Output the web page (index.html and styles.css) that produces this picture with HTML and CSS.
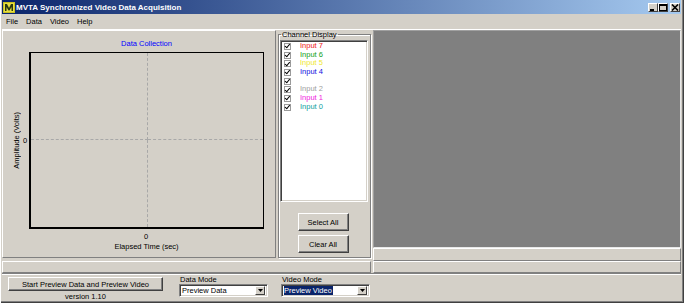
FILE: index.html
```html
<!DOCTYPE html>
<html>
<head>
<meta charset="utf-8">
<title>MVTA Synchronized Video Data Acquisition</title>
<link rel="stylesheet" href="styles.css">
</head>
<body>
<div class="window">
  <div class="titlebar">
    <svg class="app-icon" width="12" height="11" viewBox="0 0 12 11">
      <rect x="0" y="0" width="12" height="11" fill="#c8c020"/>
      <rect x="1" y="1" width="10" height="9" fill="#e8e040"/>
      <path d="M2 9 L2 2 L4 2 L6 6 L8 2 L10 2 L10 9 L8.5 9 L8.5 5 L6.5 8.5 L5.5 8.5 L3.5 5 L3.5 9 Z" fill="#2a3a10"/>
    </svg>
    <span class="title">MVTA Synchronized Video Data Acquisition</span>
    <div class="caption-btns">
      <span class="cbtn"><svg width="8" height="7" viewBox="0 0 8 7"><rect x="1" y="5" width="4" height="2" fill="#000"/></svg></span>
      <span class="cbtn"><svg width="8" height="7" viewBox="0 0 8 7"><rect x="0.5" y="0.5" width="7" height="6" fill="none" stroke="#000"/><rect x="0" y="0" width="8" height="2" fill="#000"/></svg></span>
      <span class="cbtn close"><svg width="8" height="7" viewBox="0 0 8 7"><path d="M1 0.5 L7 6.5 M7 0.5 L1 6.5" stroke="#000" stroke-width="1.6"/></svg></span>
    </div>
  </div>
  <div class="menubar">
    <span class="menu-item">File</span>
    <span class="menu-item">Data</span>
    <span class="menu-item">Video</span>
    <span class="menu-item">Help</span>
  </div>
  <div class="client">
    <div class="left-col">
      <div class="top-row">
        <div class="chart-panel">
          <div class="chart-title">Data Collection</div>
          <div class="ylabel"><span>Amplitude (Volts)</span></div>
          <div class="ytick">0</div>
          <div class="plot">
            <div class="cell c-tl"></div>
            <div class="cell c-tr"></div>
            <div class="cell c-bl"></div>
            <div class="cell c-br"></div>
          </div>
          <div class="xtick">0</div>
          <div class="xlabel">Elapsed Time (sec)</div>
        </div>
        <fieldset class="channels">
          <legend>Channel Display</legend>
          <ul class="listbox">
            <li class="item"><span class="chk"></span><span class="name in7">Input 7</span></li>
            <li class="item"><span class="chk"></span><span class="name in6">Input 6</span></li>
            <li class="item"><span class="chk"></span><span class="name in5">Input 5</span></li>
            <li class="item"><span class="chk"></span><span class="name in4">Input 4</span></li>
            <li class="item"><span class="chk"></span><span class="name"></span></li>
            <li class="item"><span class="chk"></span><span class="name in2">Input 2</span></li>
            <li class="item"><span class="chk"></span><span class="name in1">Input 1</span></li>
            <li class="item"><span class="chk"></span><span class="name in0">Input 0</span></li>
          </ul>
          <div class="group-btns">
            <button class="btn small">Select All</button>
            <button class="btn small">Clear All</button>
          </div>
        </fieldset>
      </div>
      <div class="strip strip-left"></div>
    </div>
    <div class="right-col">
      <div class="video"></div>
      <div class="strip strip-r1"></div>
      <div class="strip strip-r2"></div>
    </div>
  </div>
  <div class="bottom">
    <div class="start-col">
      <button class="btn start">Start Preview Data and Preview Video</button>
      <div class="version">version 1.10</div>
    </div>
    <div class="mode data-mode">
      <div class="mode-label">Data Mode</div>
      <div class="combo"><span class="val">Preview Data</span><span class="drop"><svg width="5" height="3" viewBox="0 0 5 3"><path d="M0 0 H5 L2.5 3 Z" fill="#000"/></svg></span></div>
    </div>
    <div class="mode video-mode">
      <div class="mode-label">Video Mode</div>
      <div class="combo"><span class="val selected">Preview Video</span><span class="drop"><svg width="5" height="3" viewBox="0 0 5 3"><path d="M0 0 H5 L2.5 3 Z" fill="#000"/></svg></span></div>
    </div>
  </div>
</div>
</body>
</html>
```
FILE: styles.css
```css
html, body {
  margin: 0;
  padding: 0;
}
body {
  width: 684px;
  height: 303px;
  overflow: hidden;
  background: #d4d0c8;
  font-family: "Liberation Sans", Arial, sans-serif;
  font-size: 7.5px;
  color: #000;
}
.window {
  box-sizing: border-box;
  width: 684px;
  height: 303px;
  display: flex;
  flex-direction: column;
  padding: 0 3px 3px 2px;
  background: #d4d0c8;
  box-shadow: inset 1px 0 #fff, inset -1px -1px #404040, inset -2px -2px #808080;
}

/* title bar */
.titlebar {
  height: 14px;
  flex: none;
  display: flex;
  align-items: center;
  background: linear-gradient(to right, #0a246a, #a6caf0);
  padding-left: 1px;
}
.app-icon {
  flex: none;
  display: block;
}
.title {
  color: #fff;
  font-weight: bold;
  font-size: 8px;
  margin-left: 1px;
  white-space: nowrap;
}
.caption-btns {
  margin-left: auto;
  margin-right: 1px;
  display: flex;
}
.cbtn {
  box-sizing: border-box;
  width: 10px;
  height: 9px;
  background: #d4d0c8;
  border: 1px solid;
  border-color: #fff #404040 #404040 #fff;
  display: flex;
  align-items: center;
  justify-content: center;
}
.cbtn svg { display: block; }
.cbtn.close { margin-left: 2px; }

/* menu */
.menubar {
  height: 15px;
  flex: none;
  display: flex;
  align-items: center;
  gap: 8px;
  padding-left: 4px;
  font-size: 7.5px;
}

/* client */
.client {
  flex: none;
  height: 244px;
  display: flex;
  border-top: 1px solid #fff;
  box-sizing: border-box;
}
.left-col {
  width: 369px;
  flex: none;
  display: flex;
  flex-direction: column;
}
.top-row {
  height: 231px;
  display: flex;
  box-sizing: border-box;
  padding-bottom: 3px;
}
.chart-panel {
  box-sizing: border-box;
  width: 274px;
  flex: none;
  border: 1px solid;
  border-color: #fff #808080 #808080 #fff;
  display: grid;
  grid-template-columns: 10px 8px 235px;
  grid-template-rows: 21px 177px 13px 10px;
  column-gap: 0;
  padding-left: 8px;
  grid-template-areas:
    ". . title"
    "ylab ytick plot"
    ". . xtick"
    ". . xlab";
}
.chart-title {
  grid-area: title;
  color: #0000ff;
  text-align: center;
  padding-top: 8px;
  line-height: 9px;
}
.ylabel {
  grid-area: ylab;
  display: flex;
  align-items: center;
  justify-content: center;
}
.ylabel span {
  writing-mode: vertical-rl;
  transform: rotate(180deg);
  white-space: nowrap;
  line-height: 9px;
}
.ytick {
  grid-area: ytick;
  align-self: center;
  text-align: center;
  line-height: 9px;
}
.plot {
  grid-area: plot;
  box-sizing: border-box;
  border: 1px solid #000;
  border-left-width: 2px;
  border-bottom-width: 2px;
  display: grid;
  grid-template-columns: 117px 1fr;
  grid-template-rows: 87px 1fr;
}
.cell { box-sizing: border-box; }
.c-tl { border-right: 1px dashed #a8a8a8; border-bottom: 1px dashed #a8a8a8; }
.c-tr { border-bottom: 1px dashed #a8a8a8; }
.c-bl { border-right: 1px dashed #a8a8a8; }
.xtick {
  grid-area: xtick;
  text-align: center;
  line-height: 9px;
  padding-top: 3px;
  padding-right: 1px;
}
.xlabel {
  grid-area: xlab;
  text-align: center;
  line-height: 9px;
}

/* channel group */
.channels {
  box-sizing: border-box;
  width: 93px;
  flex: none;
  margin: 0 0 0 2px;
  padding: 0 2px 4px 1px;
  border: 1px solid #808080;
  box-shadow: 1px 1px #fff, inset 1px 1px #fff;
  display: flex;
  flex-direction: column;
  min-width: 0;
}
.channels legend {
  padding: 0 1px;
  margin-left: 1px;
  line-height: 9px;
  font-size: 7.5px;
}
.listbox {
  list-style: none;
  margin: 1px 0 0 0;
  padding: 1px 0 0 0;
  height: 163px;
  box-sizing: border-box;
  background: #fff;
  border: 1px solid;
  border-color: #808080 #fff #fff #808080;
  box-shadow: inset 1px 1px #404040, inset -1px -1px #d4d0c8;
}
.item {
  height: 8.7px;
  display: flex;
  align-items: center;
  padding-left: 3px;
  line-height: 8.7px;
}
.chk {
  box-sizing: border-box;
  width: 7px;
  height: 7px;
  flex: none;
  position: relative;
  background: #fff;
  border: 1px solid #9a9a9a;
}
.chk::after {
  content: "";
  position: absolute;
  left: 1px;
  top: -0.5px;
  width: 2px;
  height: 3.5px;
  border: solid #000;
  border-width: 0 1.3px 1.3px 0;
  transform: rotate(40deg);
}
.name { margin-left: 9px; white-space: nowrap; }
.in7 { color: #f01818; }
.in6 { color: #10a020; }
.in5 { color: #f0e830; }
.in4 { color: #1010e0; }
.in2 { color: #a0a0a0; }
.in1 { color: #f020e0; }
.in0 { color: #10a0a0; }
.group-btns {
  display: flex;
  flex-direction: column;
  align-items: center;
  gap: 4px;
  margin-top: 11px;
  padding-right: 2px;
}
.btn {
  box-sizing: border-box;
  background: #d4d0c8;
  font-family: "Liberation Sans", Arial, sans-serif;
  font-size: 7.5px;
  color: #000;
  padding: 0;
  border: 1px solid;
  border-color: #fff #404040 #404040 #fff;
  box-shadow: inset -1px -1px #808080;
}
.btn.small {
  width: 51px;
  height: 18px;
}

/* strips */
.strip {
  box-sizing: border-box;
  border: 1px solid;
  border-color: #fff #808080 #808080 #fff;
}
.strip-left {
  height: 13px;
}
.right-col {
  flex: 1;
  display: flex;
  flex-direction: column;
  padding-left: 2px;
}
.video {
  height: 218px;
  box-sizing: border-box;
  background: #808080;
  border: 1px solid;
  border-color: #a0a0a0 #e8e8e8 #e8e8e8 #a0a0a0;
}
.strip-r1 { height: 13px; }
.strip-r2 { height: 12px; }

/* bottom */
.bottom {
  flex: 1;
  display: flex;
  align-items: flex-start;
  border-top: 1px solid #808080;
  box-shadow: inset 0 1px #fff;
}
.start-col {
  display: flex;
  flex-direction: column;
  align-items: center;
  margin-left: 6px;
  margin-top: 3px;
}
.btn.start {
  width: 155px;
  height: 14px;
}
.version {
  line-height: 9px;
  margin-top: 1px;
}
.mode {
  width: 89px;
  display: flex;
  flex-direction: column;
  margin-top: 1px;
}
.data-mode { margin-left: 16px; }
.video-mode { margin-left: 13px; }
.mode-label {
  line-height: 9px;
  padding-left: 1px;
}
.combo {
  box-sizing: border-box;
  height: 13px;
  background: #fff;
  border: 1px solid;
  border-color: #808080 #fff #fff #808080;
  box-shadow: inset 1px 1px #404040, inset -1px -1px #d4d0c8;
  display: flex;
  align-items: center;
  padding: 0 2px 0 2px;
}
.val {
  line-height: 9px;
  white-space: nowrap;
}
.val.selected {
  background: #0a246a;
  color: #fff;
  padding-right: 1px;
}
.drop {
  margin-left: auto;
  box-sizing: border-box;
  width: 10px;
  height: 9px;
  background: #d4d0c8;
  border: 1px solid;
  border-color: #fff #404040 #404040 #fff;
  display: flex;
  align-items: center;
  justify-content: center;
}
.drop svg { display: block; }
```
